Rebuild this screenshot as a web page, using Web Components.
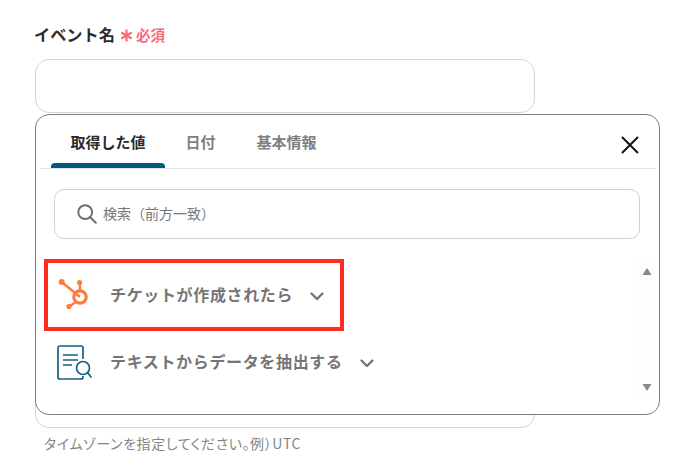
<!DOCTYPE html>
<html lang="ja"><head><meta charset="utf-8">
<style>
html,body{margin:0;padding:0;background:#fff}
body{width:695px;height:467px;overflow:hidden;font-family:"Noto Sans CJK JP","Noto Sans",sans-serif}
</style></head><body>
<event-form></event-form>
<script>
class BaseEl extends HTMLElement{
  constructor(){super();this.attachShadow({mode:'open'}).innerHTML=this.constructor.markup;}
}
class FieldLabel extends BaseEl{static markup=`<style>
:host{display:flex;align-items:center;height:24px;font-size:16.200px;font-weight:700;color:#2d2d2d;gap:5px;margin-left:-1px}
.req{display:flex;align-items:center;gap:3px;color:#fb6a76;font-size:14.500px;font-weight:700}
svg{display:block;margin-top:3px}
</style><slot></slot><span class="req"><svg width="13" height="13" viewBox="0 0 12 12" fill="none" stroke="#fb6a76" stroke-width="2"><path d="M6 .5v11M1.200 3.200l9.600 5.600M10.800 3.200L1.200 8.800"/></svg>必須</span>`}
class TextBox extends BaseEl{static markup=`<style>
:host{display:block;box-sizing:border-box;width:500px;height:54px;border:1px solid #d4d4de;border-radius:14px;background:#fff}
</style>`}
class TabItem extends BaseEl{static markup=`<style>
:host{display:flex;align-items:center;justify-content:center;position:relative;height:53px;font-size:15px;font-weight:700;color:#7f7f7f;white-space:nowrap}
:host([active]){color:#2b2b2b}
:host([active])::after{content:"";position:absolute;left:0;right:0;bottom:0;height:5px;background:#00597f;border-radius:4px 4px 0 0}
</style><slot></slot>`}
class SearchBox extends BaseEl{static markup=`<style>
:host{display:flex;align-items:center;box-sizing:border-box;height:50px;margin:20px 19px 0 18px;padding:0 0 2px 22px;gap:6px;border:1px solid #cfcfd3;border-radius:10px;font-size:14px;color:#777;background:#fff}
svg{display:block;margin-top:2px}
</style><svg width="20" height="20" viewBox="0 0 20 20" fill="none" stroke="#6f6f6f" stroke-width="2"><circle cx="8.200" cy="8.200" r="6.900"/><path d="M13.200 13.200l5.600 5.600" stroke-linecap="round"/></svg><slot></slot>`}
class FlowRow extends BaseEl{static markup=`<style>
:host{display:flex;align-items:center;box-sizing:border-box;height:64px;font-size:16px;letter-spacing:.65px;font-weight:700;color:#757575}
.ic{width:54px;padding-left:12px;flex:none;display:flex}
.t{margin-bottom:4px}
svg{display:block}
.ch{margin:1px 0 0 17px}
:host([marked]){border:4px solid #ff2d1c;width:300px;height:72px}
:host([marked]) .ic{width:53px;padding-left:9px}
:host([marked]) .t{margin-bottom:2px}
:host([marked]) .ch{margin-top:3px}
</style><span class="ic"><slot name="icon"></slot></span><span class="t"><slot></slot></span><svg class="ch" width="14" height="9" viewBox="0 0 14 9" fill="none" stroke="#6f6f6f" stroke-width="2.200" stroke-linecap="round" stroke-linejoin="round"><path d="M1.500 1.500L7 7l5.500-5.500"/></svg>`}
class ScrollTrack extends BaseEl{static markup=`<style>
:host{position:absolute;right:5px;top:142px;height:143px;width:15px;background:#fdfcfe;display:flex;flex-direction:column;justify-content:space-between;align-items:center;padding:11px 0 9px;box-sizing:border-box}
svg{display:block}
</style><svg width="10" height="7" viewBox="0 0 10 7"><path d="M5 0L9.500 7H.5z" fill="#8a868c"/></svg><svg width="10" height="7" viewBox="0 0 10 7"><path d="M.5 0H9.500L5 7z" fill="#8a868c"/></svg>`}
class PickerPanel extends BaseEl{static markup=`<style>
:host{position:absolute;left:35px;top:114px;box-sizing:border-box;width:625px;height:301px;border:1px solid #7b7b7b;border-radius:14px;background:#fff;overflow:hidden}
.tabs{display:flex;margin:0 3px 0 4px;padding-left:11px;gap:21px;border-bottom:1px solid #e4e4e6;height:53px;position:relative}
.close{position:absolute;right:17px;top:21px;display:block}
.list{margin:20px 0 0 8px}
::slotted(tab-item:nth-child(1)){width:114px}
::slotted(tab-item:nth-child(2)){width:29px;margin-right:19px}
::slotted(tab-item:nth-child(3)){width:63px}
</style><div class="tabs"><slot name="tabs"></slot><svg class="close" width="18" height="18" viewBox="0 0 18 18" stroke="#111" stroke-width="2" fill="none"><path d="M1 1l16 16M17 1L1 17"/></svg></div><slot name="search"></slot><div class="list"><slot></slot></div><scroll-track></scroll-track>`}
class EventForm extends BaseEl{static markup=`<style>
:host{display:block;position:relative;width:695px;height:467px;box-sizing:border-box;padding:22px 0 0 35px}
.g{margin-top:13px}
.second{margin-top:261px}
.help{margin:6px 0 0 9px;font-size:14px;color:#858585;line-height:18px;font-feature-settings:"palt";letter-spacing:.57px}
</style>
<field-label>イベント名</field-label>
<text-box class="g"></text-box>
<text-box class="second"></text-box>
<div class="help">タイムゾーンを指定してください。例）UTC</div>
<picker-panel>
<tab-item slot="tabs" active>取得した値</tab-item>
<tab-item slot="tabs">日付</tab-item>
<tab-item slot="tabs">基本情報</tab-item>
<search-box slot="search">検索（前方一致）</search-box>
<flow-row marked>
<svg slot="icon" width="34" height="34" viewBox="0 0 34 34" fill="none"><g stroke="#ff7a3d"><circle cx="23" cy="19" r="6.200" stroke-width="3.200"/><path d="M4.700 4L23 19M22.800 4.500L23 12M12 28.500L19 24" stroke-width="2.400"/></g><g fill="#ff7a3d"><circle cx="4.700" cy="4" r="3"/><circle cx="22.600" cy="4.500" r="2.600"/><circle cx="12" cy="28.500" r="2.600"/></g></svg>
チケットが作成されたら</flow-row>
<flow-row>
<svg slot="icon" width="36" height="36" viewBox="0 0 36 36" fill="none" stroke="#15617f" stroke-width="1.700"><path d="M27 14V3q0-2-2-2H4Q2 1 2 3v29q0 2 2 2h21q2 0 2-2v-1"/><path d="M7 10h15M7 15h15M7 20h9"/><circle cx="27" cy="23" r="6.500"/><path d="M31.700 27.700L35 32" stroke-linecap="round"/></svg>
テキストからデータを抽出する</flow-row>
</picker-panel>`}
[['field-label',FieldLabel],['text-box',TextBox],['tab-item',TabItem],['search-box',SearchBox],['flow-row',FlowRow],['scroll-track',ScrollTrack],['picker-panel',PickerPanel],['event-form',EventForm]].forEach(([n,c])=>customElements.define(n,c));
</script>
</body></html>
